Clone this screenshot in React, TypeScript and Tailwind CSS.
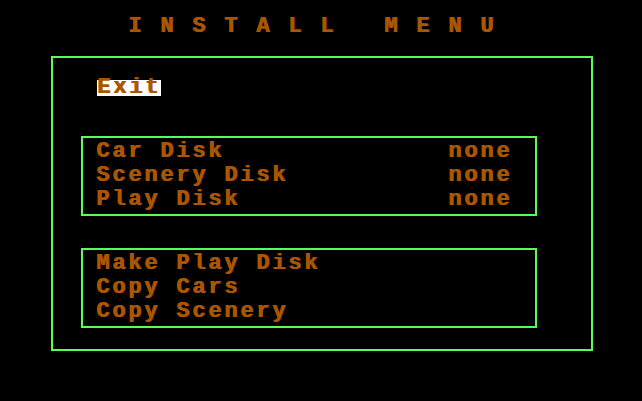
import React from "react";

const font =
  "font-['Liberation_Mono','DejaVu_Sans_Mono',monospace] font-bold text-[22px] tracking-[2.8px] text-[#aa5500] whitespace-pre [text-shadow:1px_0_0_#aa5500]";

function Row({ label, value }: { label: string; value?: string }) {
  return (
    <div className={`flex h-6 items-center leading-4 pt-[2px] ${font}`}>
      <span className="w-[352px]">{label}</span>
      {value && <span>{value}</span>}
    </div>
  );
}

export default function App() {
  return (
    <div className="w-[642px] h-[401px] bg-black overflow-hidden">
      <div className={`h-4 mt-[18px] ml-[128px] leading-[18px] ${font}`}>
        {"I N S T A L L   M E N U"}
      </div>
      <div className="ml-[51px] mt-[22px] w-[542px] h-[295px] border-2 border-[#55ff55]">
        <div className={`mt-[22px] ml-[44px] w-16 h-4 bg-white leading-4 ${font}`}>
          Exit
        </div>
        <div className="mt-[40px] ml-[28px] w-[456px] h-[80px] border-2 border-[#55ff55] pt-[1px] pl-[13px]">
          <Row label="Car Disk" value="none" />
          <Row label="Scenery Disk" value="none" />
          <Row label="Play Disk" value="none" />
        </div>
        <div className="mt-[32px] ml-[28px] w-[456px] h-[80px] border-2 border-[#55ff55] pt-[1px] pl-[13px]">
          <Row label="Make Play Disk" />
          <Row label="Copy Cars" />
          <Row label="Copy Scenery" />
        </div>
      </div>
    </div>
  );
}
